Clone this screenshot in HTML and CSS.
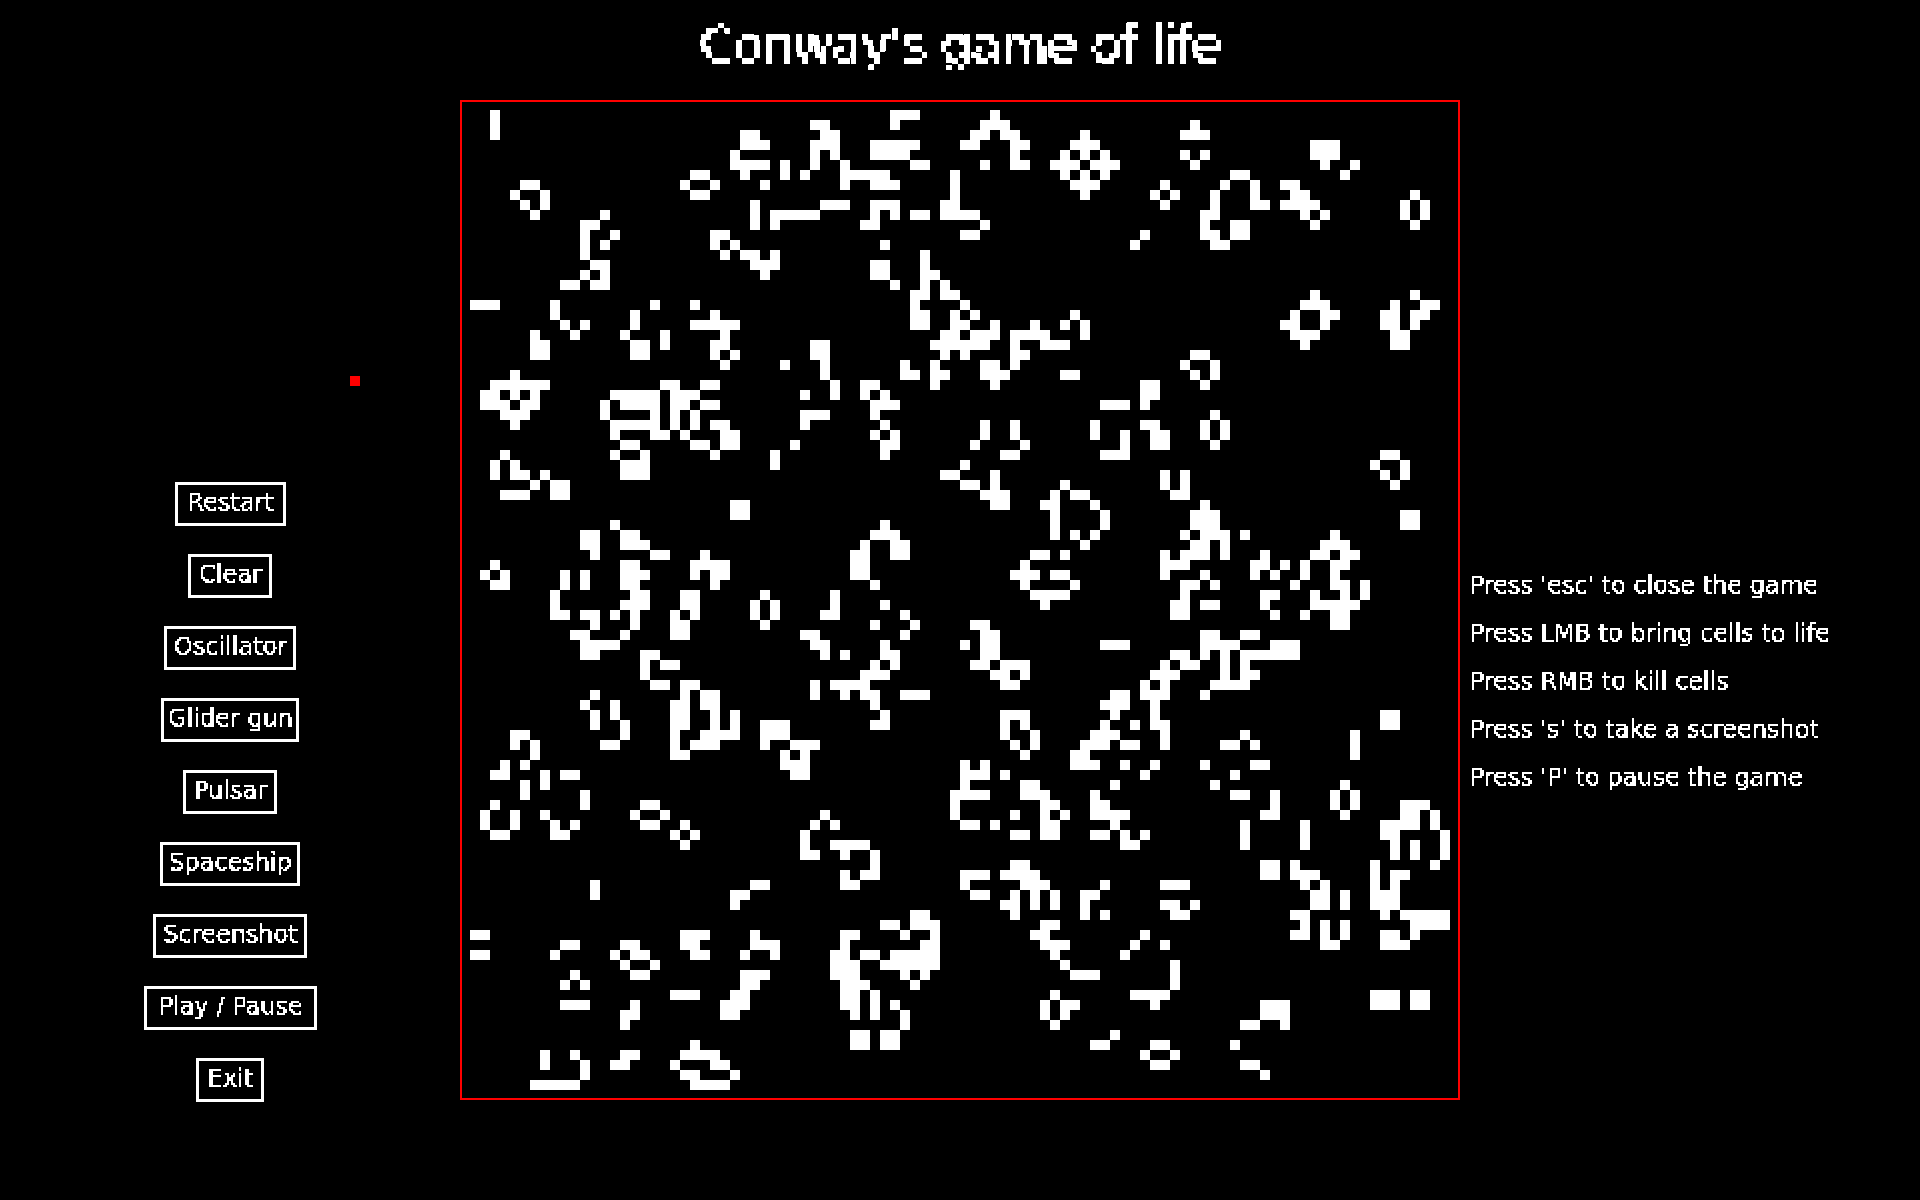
FILE: index.html
```html
<!DOCTYPE html>
<html lang="en">
<head>
    <meta charset="UTF-8">
    <title>Conway's game of life</title>
    <link rel="stylesheet" href="styles.css">
</head>
<body>
<svg class="defs" width="0" height="0">
    <filter id="blocky-big" x="0" y="0" width="1" height="1" color-interpolation-filters="sRGB">
        <feFlood x="2" y="2" width="2" height="2"/>
        <feComposite width="6" height="6"/>
        <feTile result="dots"/>
        <feComposite in="SourceGraphic" in2="dots" operator="in"/>
        <feMorphology operator="dilate" radius="2"/>
        <feComponentTransfer>
            <feFuncA type="discrete" tableValues="0 1 1 1"/>
        </feComponentTransfer>
    </filter>
    <filter id="blocky-small" x="0" y="0" width="1" height="1" color-interpolation-filters="sRGB">
        <feFlood x="0" y="0" width="1" height="1"/>
        <feComposite width="2" height="2"/>
        <feTile result="dots"/>
        <feComposite in="SourceGraphic" in2="dots" operator="in" result="one"/>
        <feOffset in="one" dx="1" dy="0" result="right"/>
        <feMerge result="wide">
            <feMergeNode in="one"/>
            <feMergeNode in="right"/>
        </feMerge>
        <feOffset in="wide" dx="0" dy="1" result="down"/>
        <feMerge>
            <feMergeNode in="wide"/>
            <feMergeNode in="down"/>
        </feMerge>
        <feComponentTransfer>
            <feFuncA type="discrete" tableValues="0 1 1 1"/>
        </feComponentTransfer>
    </filter>
</svg>

<h1 id="title"><span>Conway's game of life</span></h1>

<div id="contain">
    <div id="menu">
        <div id="cursor"></div>
        <button class="btn" id="restart"><span>Restart</span></button>
        <button class="btn" id="clear"><span>Clear</span></button>
        <button class="btn" id="oscillator"><span>Oscillator</span></button>
        <button class="btn" id="glider"><span>Glider gun</span></button>
        <button class="btn" id="pulsar"><span>Pulsar</span></button>
        <button class="btn" id="spaceship"><span>Spaceship</span></button>
        <button class="btn" id="screenshot"><span>Screenshot</span></button>
        <button class="btn" id="pause"><span>Play / Pause</span></button>
        <button class="btn" id="exit"><span>Exit</span></button>
    </div>

    <canvas id="board" width="1000" height="1000"></canvas>

    <div id="help">
        <p><span>Press 'esc' to close the game</span></p>
        <p><span>Press LMB to bring cells to life</span></p>
        <p><span>Press RMB to kill cells</span></p>
        <p><span>Press 's' to take a screenshot</span></p>
        <p><span>Press 'P' to pause the game</span></p>
    </div>
</div>
<script src="script.js"></script>
</body>
</html>
```

FILE: styles.css
```css
* {
    margin: 0;
    padding: 0;
}

body {
    background-color: #000;
    color: #fff;
    font-family: "DejaVu Sans", sans-serif;
    overflow: hidden;
}

.defs {
    position: absolute;
}

#title {
    height: 100px;
    display: flex;
    justify-content: center;
    align-items: center;
    font-size: 50px;
    font-weight: normal;
}

#title span {
    display: block;
    padding: 0 12px 10px 12px;
    letter-spacing: -1.5px;
    filter: url(#blocky-big);
}

#contain {
    display: flex;
    height: 1100px;
}

#menu {
    position: relative;
    width: 460px;
    box-sizing: border-box;
    padding-top: 382px;
    display: flex;
    flex-direction: column;
    align-items: center;
    gap: 28px;
}

#cursor {
    position: absolute;
    left: 350px;
    top: 276px;
    width: 10px;
    height: 10px;
    background-color: #f00;
}

.btn {
    height: 44px;
    padding-bottom: 4px;
    border: 3px solid #fff;
    background-color: #000;
    color: #fff;
    font-family: inherit;
    font-size: 24px;
}

.btn span {
    display: block;
    padding: 1px;
    white-space: nowrap;
    filter: url(#blocky-small);
}

#restart { width: 111px; }
#clear { width: 84px; }
#oscillator { width: 132px; }
#glider { width: 138px; }
#pulsar { width: 94px; }
#spaceship { width: 140px; }
#screenshot { width: 154px; }
#pause { width: 173px; }
#exit { width: 68px; }

#board {
    display: block;
    width: 1000px;
    height: 1000px;
    outline: 2px solid #f00;
    outline-offset: -2px;
}

#help {
    margin-left: 8px;
    padding-top: 470px;
    display: flex;
    flex-direction: column;
    gap: 18px;
    font-size: 24px;
}

#help p {
    height: 30px;
    line-height: 28px;
    white-space: nowrap;
}

#help span {
    display: block;
    padding: 1px;
    filter: url(#blocky-small);
}
```

FILE: script.js
```js
let rows = [
    '',
    '3 43-45 53',
    '3 35-36 43 52-54 73',
    '3 28-29 36-37 51-52 54-55 62 72-74',
    '28-30 35-37 41-45 50-51 55-56 61-63 85-87',
    '27 35 37 41-44 55 60 62 64 72 74 85-87',
    '27-30 32 35 38 45-46 52 55-56 59-61 63-65 73 86 89',
    '23-24 28 32 34 38-42 49 60 62 64 77-78 88',
    '6-7 22 25 30 38 41-43 49 61-63 70 76 79 82-83',
    '5 8 23-24 49 62 69 71 75 79 83-84 95',
    '6 8 29 36-38 41-43 48-49 70 75 79-80 82-85 94 96',
    '7 14 29 31-35 41 43 45-46 48-51 74-75 84 86 94 96',
    '12-13 29 31 40-41 52 74 77-78 85 95',
    '12 15 25-26 50-51 68 74-75 77-78',
    '12 14 25 27 42 67 75-76',
    '12 26 28-29 31 46',
    '13-14 29-31 41-42 46',
    '12 14 30 41-42 46-47',
    '10-11 13-14 43 46 48',
    '45-46 48-49 85 95',
    '1-3 9 19 23 45 50 84-86 93 96-97',
    '9 17 25 45-46 49 51 61 83 86-87 92-93 95-96',
    '10 12 17 23-27 45-46 49-50 53 57 60 62 82-83 86 92-93 95',
    '7 11 16 20 26 48-49 51-53 55-58 62 83-85 93-94',
    '7-8 17-18 20 25-26 35-36 47-52 55 58-60 84 93-94',
    '7-8 17-18 25 27 35-36 48 50 55-56 73-74',
    '26 32 36 44 47 52-53 55 72 75',
    '5 36 44-45 47-48 52-54 60-61 73 75',
    '3-8 20-21 24-25 37 40-41 47 53 68-69 74',
    '2-3 5 7 15-19 21-23 34 37 40 42 68-69',
    '2-4 6-7 14 16-19 21-22 24-25 41-43 64-66 68',
    '4-6 14 19 21 23 34-36 41 75',
    '5 15-19 21 23 25-26 34 42 52 55 63 68-69 74 76',
    '15 19-20 22 26-27 41 43 52 55 63 66 69-70 74 76',
    '16-17 23-24 26-27 33 42-43 51 56 66 69-70 75',
    '4 15 18 25 31 42 54-55 64-66 92-93',
    '3 5 16-18 31 50 91 94',
    '3 5-6 8 16-18 48-49 53 70 72 92 94',
    '7 9-10 50-51 53 60 70 72 93',
    '4-6 9-10 52-54 59 61-62 71-72',
    '27-28 53-54 58-59 63 74',
    '27-28 59 64 73-75 94-95',
    '15 42 59 64 73-75 94-95',
    '12-13 16-17 41-43 59 61 63 72 74-76 78 87',
    '12-13 16-18 40 43-44 62 73-74 76 86-88',
    '13 19-20 24 39-40 43-44 57-58 60 70 72-74 76 80 85-86 88-89',
    '3 16-17 23-26 39-40 56 70-72 79-80 82 84 87-88',
    '2 4 10 12 16-18 23 25-26 39-40 55-57 59-60 70 74 79 81 84 87',
    '3-4 10 12 16-17 25 41 56 61 72-73 75 83 87-88 90',
    '9 17-18 22-23 30 37 57-60 72 80-81 85 88 90',
    '9 16-18 22-23 29 31 37 42 58 71-72 74-75 80 85-89',
    '9-10 12-13 15 17 21 23 29 31 36-37 44 71-72 81 84 87-88',
    '13 17 21-22 30 41 45 51-52 87-88',
    '11-12 16 21-22 34-35 44 52-53 74-75 78-79',
    '12-15 35-36 42 50 52-53 64-66 74-77 81-83',
    '12-13 18-19 36 38 42-43 52-53 71-72 74 76 78-83',
    '18 20-21 41 43 51-52 54-56 70 72-73 76 78',
    '18 40-42 53-54 56 69-71 76 78-79',
    '19-20 22-23 35 37-40 54-55 68 70 75-78',
    '13 22 24-25 35 38 40-41 44-46 65-66 68-70 74',
    '12 15 21-22 24-25 41 64-66 69',
    '13 15 21-22 25 27 42 54-56 65 69 92-93',
    '13 16 21-22 25 27 30-32 41-42 54 56 64 67 69-70 92-93',
    '5-6 16 21 24-27 30-32 54 57 63-65 70 78 89',
    '5 7 14-15 21 23-25 30 33-35 55 57 62-64 66-67 70 76-77 79 89',
    '7 21-22 32 34 56 61-62 89',
    '4 6 32-34 50 52 61-63 66 69 74 79-80',
    '3-4 8 10-11 33-34 50-52 54 68 77',
    '6 8 50 56-57 65 75 88',
    '6 12 49-52 56-58 63 77-78 81 87 89',
    '3 12 18-19 49 58-59 63-64 81 87 89 94-96',
    '2 5 8 17 20 36 49 55 58 60 63-66 80-81 88 94-95 97',
    '2 5 9 11 18-19 22 35 37 50-51 53 58-59 65 78 84 92-95 97',
    '3-4 9-10 21 23 34 55-56 58-59 63-64 66 68 78 84 92-93 98',
    '22 34 37-40 66-67 78 84 93 95 98',
    '34-35 38 41 93 95 98',
    '41 55-56 80-81 83 91 97',
    '38 40-41 50-52 54-57 80-81 83-85 91 93-94',
    '13 29-30 38-39 50 56-58 64 70-72 84 86 91 93',
    '13 27-28 51-52 55 57 59 62-63 85-86 88 91-93',
    '27 54-55 57 59 62 70-71 73 85-86 88 91-93',
    '45-46 55 62 64 71-72 83-84 92 94-98',
    '42-43 45-47 58-59 84 86 88 95-98',
    '1-2 22-24 29 38-39 44 47 57-58 68 83-84 86 88 92-93 95',
    '10-11 16-17 22-23 29-31 38 46-47 58-60 67 70 86-87 92-94',
    '1-2 9 15 17-18 23-24 28 31 37-38 40-41 43-47 59 66',
    '16 19 37-39 42-47 60 71',
    '11 17-18 28-30 37-39 44 46 61-63 71',
    '10 12 28-29 38-40 45 71',
    '21-23 27-28 38-39 41 59 67-70 91-93 95-96',
    '10-12 17 26-28 38-39 41 43 58 60-61 69 80-82 91-93 95-96',
    '16-17 26-27 39 41 44 58 60 80-82',
    '16 44 59 78-79 82',
    '39-40 42-43 65',
    '23 39-40 42-43 63-64 69-70 77',
    '8 11 16-17 22-25 68 71',
    '8 12 15-16 21 25-26 69-70 78-79',
    '12 22-23 27 80',
    '7-11 23-26'
]

let cell = 10
let ctx = document.getElementById('board').getContext('2d')
ctx.fillStyle = '#000'
ctx.fillRect(0, 0, 1000, 1000)
ctx.fillStyle = '#fff'
rows.forEach(function(row, y){
    if(!row) return
    row.split(' ').forEach(function(run){
        let ends = run.split('-').map(Number)
        let from = ends[0]
        let to = ends.length > 1 ? ends[1] : from
        ctx.fillRect(from * cell, y * cell, (to - from + 1) * cell, cell)
    })
})
```
